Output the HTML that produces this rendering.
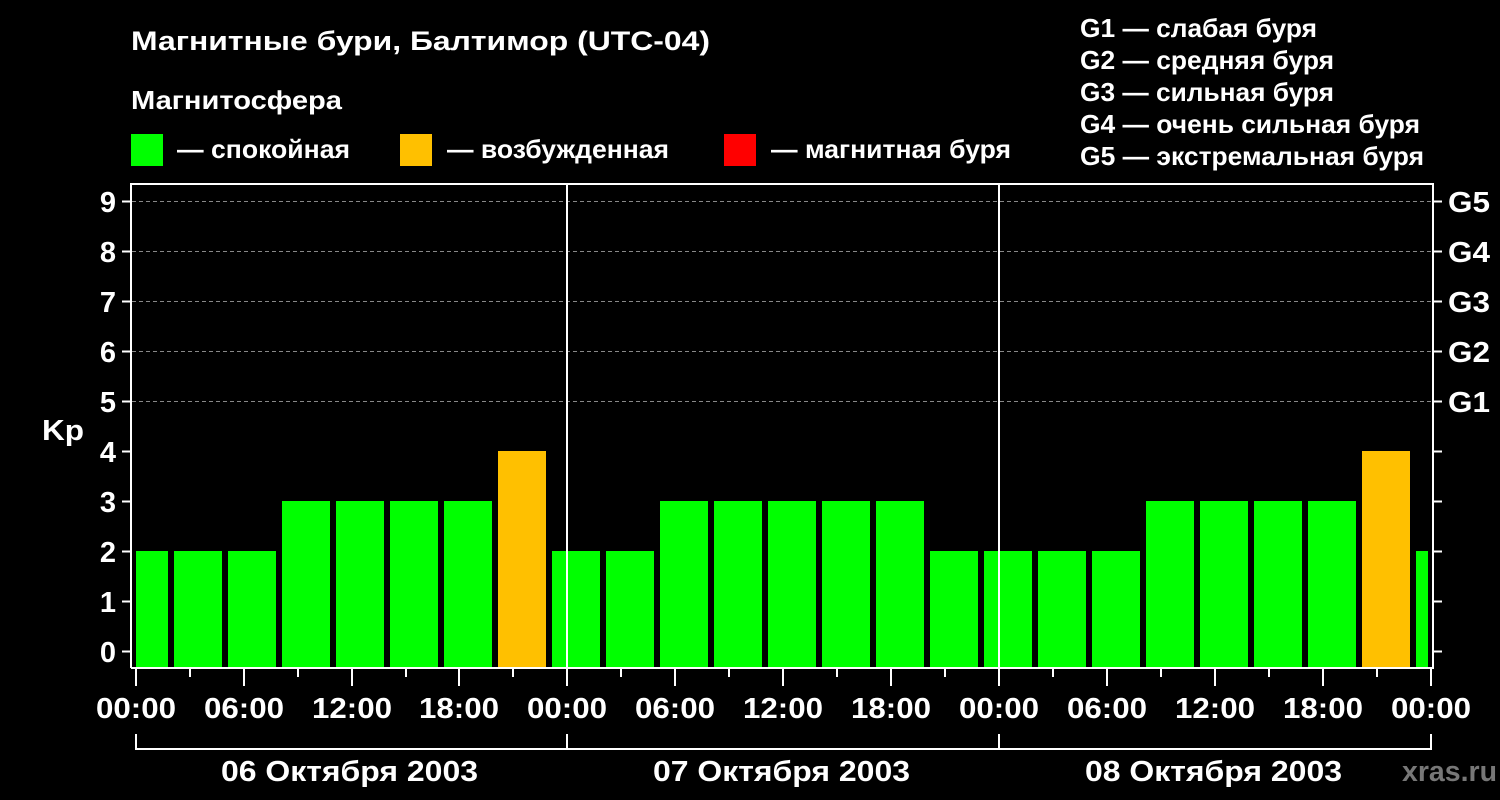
<!DOCTYPE html>
<html><head><meta charset="utf-8"><style>
html,body{margin:0;padding:0;background:#000;width:1500px;height:800px;overflow:hidden}
svg{display:block}
text{font-family:"Liberation Sans",sans-serif;font-weight:bold;fill:#fff}
</style></head><body>
<svg width="1500" height="800" viewBox="0 0 1500 800">
<text x="131" y="50" font-size="27" textLength="579" lengthAdjust="spacingAndGlyphs">Магнитные бури, Балтимор (UTC-04)</text>
<text x="131" y="109" font-size="26" textLength="211" lengthAdjust="spacingAndGlyphs">Магнитосфера</text>
<rect x="131" y="134" width="32" height="32" fill="#00ff00"/>
<text x="177" y="158" font-size="26" textLength="173" lengthAdjust="spacingAndGlyphs">— спокойная</text>
<rect x="400" y="134" width="32" height="32" fill="#ffc000"/>
<text x="447" y="158" font-size="26" textLength="222" lengthAdjust="spacingAndGlyphs">— возбужденная</text>
<rect x="724" y="134" width="32" height="32" fill="#ff0000"/>
<text x="771" y="158" font-size="26" textLength="240" lengthAdjust="spacingAndGlyphs">— магнитная буря</text>
<g font-size="26">
<text x="1080" y="37" textLength="237" lengthAdjust="spacingAndGlyphs">G1 — слабая буря</text>
<text x="1080" y="69" textLength="254" lengthAdjust="spacingAndGlyphs">G2 — средняя буря</text>
<text x="1080" y="101" textLength="254" lengthAdjust="spacingAndGlyphs">G3 — сильная буря</text>
<text x="1080" y="133" textLength="340" lengthAdjust="spacingAndGlyphs">G4 — очень сильная буря</text>
<text x="1080" y="165" textLength="344" lengthAdjust="spacingAndGlyphs">G5 — экстремальная буря</text>
</g>
<g stroke="#888" stroke-width="1" stroke-dasharray="4,3">
<line x1="132" y1="201.5" x2="1433" y2="201.5"/>
<line x1="132" y1="251.5" x2="1433" y2="251.5"/>
<line x1="132" y1="301.5" x2="1433" y2="301.5"/>
<line x1="132" y1="351.5" x2="1433" y2="351.5"/>
<line x1="132" y1="401.5" x2="1433" y2="401.5"/>
</g>
<g fill="#00ff00">
<rect x="136" y="551" width="32" height="117"/>
<rect x="174" y="551" width="48" height="117"/>
<rect x="228" y="551" width="48" height="117"/>
<rect x="282" y="501" width="48" height="167"/>
<rect x="336" y="501" width="48" height="167"/>
<rect x="390" y="501" width="48" height="167"/>
<rect x="444" y="501" width="48" height="167"/>
<rect x="552" y="551" width="48" height="117"/>
<rect x="606" y="551" width="48" height="117"/>
<rect x="660" y="501" width="48" height="167"/>
<rect x="714" y="501" width="48" height="167"/>
<rect x="768" y="501" width="48" height="167"/>
<rect x="822" y="501" width="48" height="167"/>
<rect x="876" y="501" width="48" height="167"/>
<rect x="930" y="551" width="48" height="117"/>
<rect x="984" y="551" width="48" height="117"/>
<rect x="1038" y="551" width="48" height="117"/>
<rect x="1092" y="551" width="48" height="117"/>
<rect x="1146" y="501" width="48" height="167"/>
<rect x="1200" y="501" width="48" height="167"/>
<rect x="1254" y="501" width="48" height="167"/>
<rect x="1308" y="501" width="48" height="167"/>
<rect x="1416" y="551" width="12" height="117"/>
</g>
<g fill="#ffc000">
<rect x="498" y="451" width="48" height="217"/>
<rect x="1362" y="451" width="48" height="217"/>
</g>
<g stroke="#fff" stroke-width="2" fill="none">
<path d="M131 668 V184 H1433 V668 H131"/>
<line x1="567" y1="184" x2="567" y2="668"/>
<line x1="999" y1="184" x2="999" y2="668"/>
<path d="M122 201.5h9M122 251.5h9M122 301.5h9M122 351.5h9M122 401.5h9M122 451.5h9M122 501.5h9M122 551.5h9M122 601.5h9M122 651.5h9"/>
<path d="M1433 201.5h9M1433 251.5h9M1433 301.5h9M1433 351.5h9M1433 401.5h9M1433 451.5h9M1433 501.5h9M1433 551.5h9M1433 601.5h9M1433 651.5h9"/>
<path d="M136 668v18M567 668v18M999 668v18M1431 668v18M244 668v18M352 668v18M459 668v18M675 668v18M783 668v18M891 668v18M1107 668v18M1215 668v18M1323 668v18"/>
<path d="M190 668v9M298 668v9M406 668v9M513 668v9M621 668v9M729 668v9M837 668v9M945 668v9M1053 668v9M1161 668v9M1269 668v9M1377 668v9"/>
<path d="M136 734v15M567 734v15M999 734v15M1431 734v15M135 749H1432"/>
</g>
<g font-size="29" text-anchor="end">
<text x="116" y="212">9</text><text x="116" y="262">8</text><text x="116" y="312">7</text>
<text x="116" y="362">6</text><text x="116" y="412">5</text><text x="116" y="462">4</text>
<text x="116" y="512">3</text><text x="116" y="562">2</text><text x="116" y="612">1</text><text x="116" y="662">0</text>
</g>
<text x="42" y="440" font-size="29" textLength="42" lengthAdjust="spacingAndGlyphs">Kp</text>
<g font-size="29">
<text x="1448" y="212" textLength="42" lengthAdjust="spacingAndGlyphs">G5</text><text x="1448" y="262" textLength="42" lengthAdjust="spacingAndGlyphs">G4</text><text x="1448" y="312" textLength="42" lengthAdjust="spacingAndGlyphs">G3</text>
<text x="1448" y="362" textLength="42" lengthAdjust="spacingAndGlyphs">G2</text><text x="1448" y="412" textLength="42" lengthAdjust="spacingAndGlyphs">G1</text>
</g>
<g font-size="29" text-anchor="middle">
<text x="136" y="718" textLength="80" lengthAdjust="spacingAndGlyphs">00:00</text><text x="244" y="718" textLength="80" lengthAdjust="spacingAndGlyphs">06:00</text><text x="352" y="718" textLength="80" lengthAdjust="spacingAndGlyphs">12:00</text><text x="459" y="718" textLength="80" lengthAdjust="spacingAndGlyphs">18:00</text>
<text x="567" y="718" textLength="80" lengthAdjust="spacingAndGlyphs">00:00</text><text x="675" y="718" textLength="80" lengthAdjust="spacingAndGlyphs">06:00</text><text x="783" y="718" textLength="80" lengthAdjust="spacingAndGlyphs">12:00</text><text x="891" y="718" textLength="80" lengthAdjust="spacingAndGlyphs">18:00</text>
<text x="999" y="718" textLength="80" lengthAdjust="spacingAndGlyphs">00:00</text><text x="1107" y="718" textLength="80" lengthAdjust="spacingAndGlyphs">06:00</text><text x="1215" y="718" textLength="80" lengthAdjust="spacingAndGlyphs">12:00</text><text x="1323" y="718" textLength="80" lengthAdjust="spacingAndGlyphs">18:00</text>
<text x="1431" y="718" textLength="80" lengthAdjust="spacingAndGlyphs">00:00</text>
</g>
<g font-size="29">
<text x="221" y="781" textLength="257" lengthAdjust="spacingAndGlyphs">06 Октября 2003</text>
<text x="653" y="781" textLength="257" lengthAdjust="spacingAndGlyphs">07 Октября 2003</text>
<text x="1085" y="781" textLength="257" lengthAdjust="spacingAndGlyphs">08 Октября 2003</text>
</g>
<text x="1402" y="781" font-size="29" textLength="95" lengthAdjust="spacingAndGlyphs" style="fill:#777">xras.ru</text>
</svg>
</body></html>
